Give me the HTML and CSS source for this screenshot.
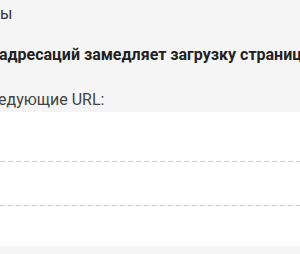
FILE: index.html
```html
<!DOCTYPE html>
<html lang="ru">
<head>
<meta charset="utf-8">
<link rel="stylesheet" href="styles.css">
</head>
<body>
<section class="audit">
  <p class="title">ы</p>
  <p class="desc">адресаций замедляет загрузку страницы</p>
  <p class="hint">едующие URL:</p>
</section>
<section class="urls">
  <div class="row row-first"></div>
  <div class="row"></div>
  <div class="row row-last"></div>
</section>
<section class="footer"></section>
</body>
</html>
```
FILE: styles.css
```css
html, body {
  margin: 0;
  padding: 0;
}
body {
  background: #f5f5f5;
  font-family: Roboto, "Noto Sans", sans-serif;
  font-size: 16px;
  line-height: 20px;
  color: #333;
  width: 300px;
  height: 254px;
  overflow: hidden;
}
.audit {
  display: flex;
  flex-direction: column;
  padding-top: 4px;
  height: 112px;
  box-sizing: border-box;
}
.audit p {
  margin: 0;
  white-space: nowrap;
}
.desc {
  margin-top: 21px !important;
  margin-left: -1px !important;
  font-weight: 700;
  color: #222;
}
.hint {
  margin-top: 25px !important;
  margin-left: -2px !important;
  color: #444;
}
.urls {
  background: #fff;
  height: 134px;
  display: flex;
  flex-direction: column;
}
.row {
  height: 44px;
  flex: none;
}
.row-first {
  height: 49px;
}
.row + .row {
  background-image: repeating-linear-gradient(to right, #cccccc 0 5px, transparent 5px 8px);
  background-size: 100% 1px;
  background-repeat: no-repeat;
  background-position: 0 0;
}
.row-last {
  flex: 1;
}
.footer {
  background: #f5f5f5;
  height: 8px;
}
```
